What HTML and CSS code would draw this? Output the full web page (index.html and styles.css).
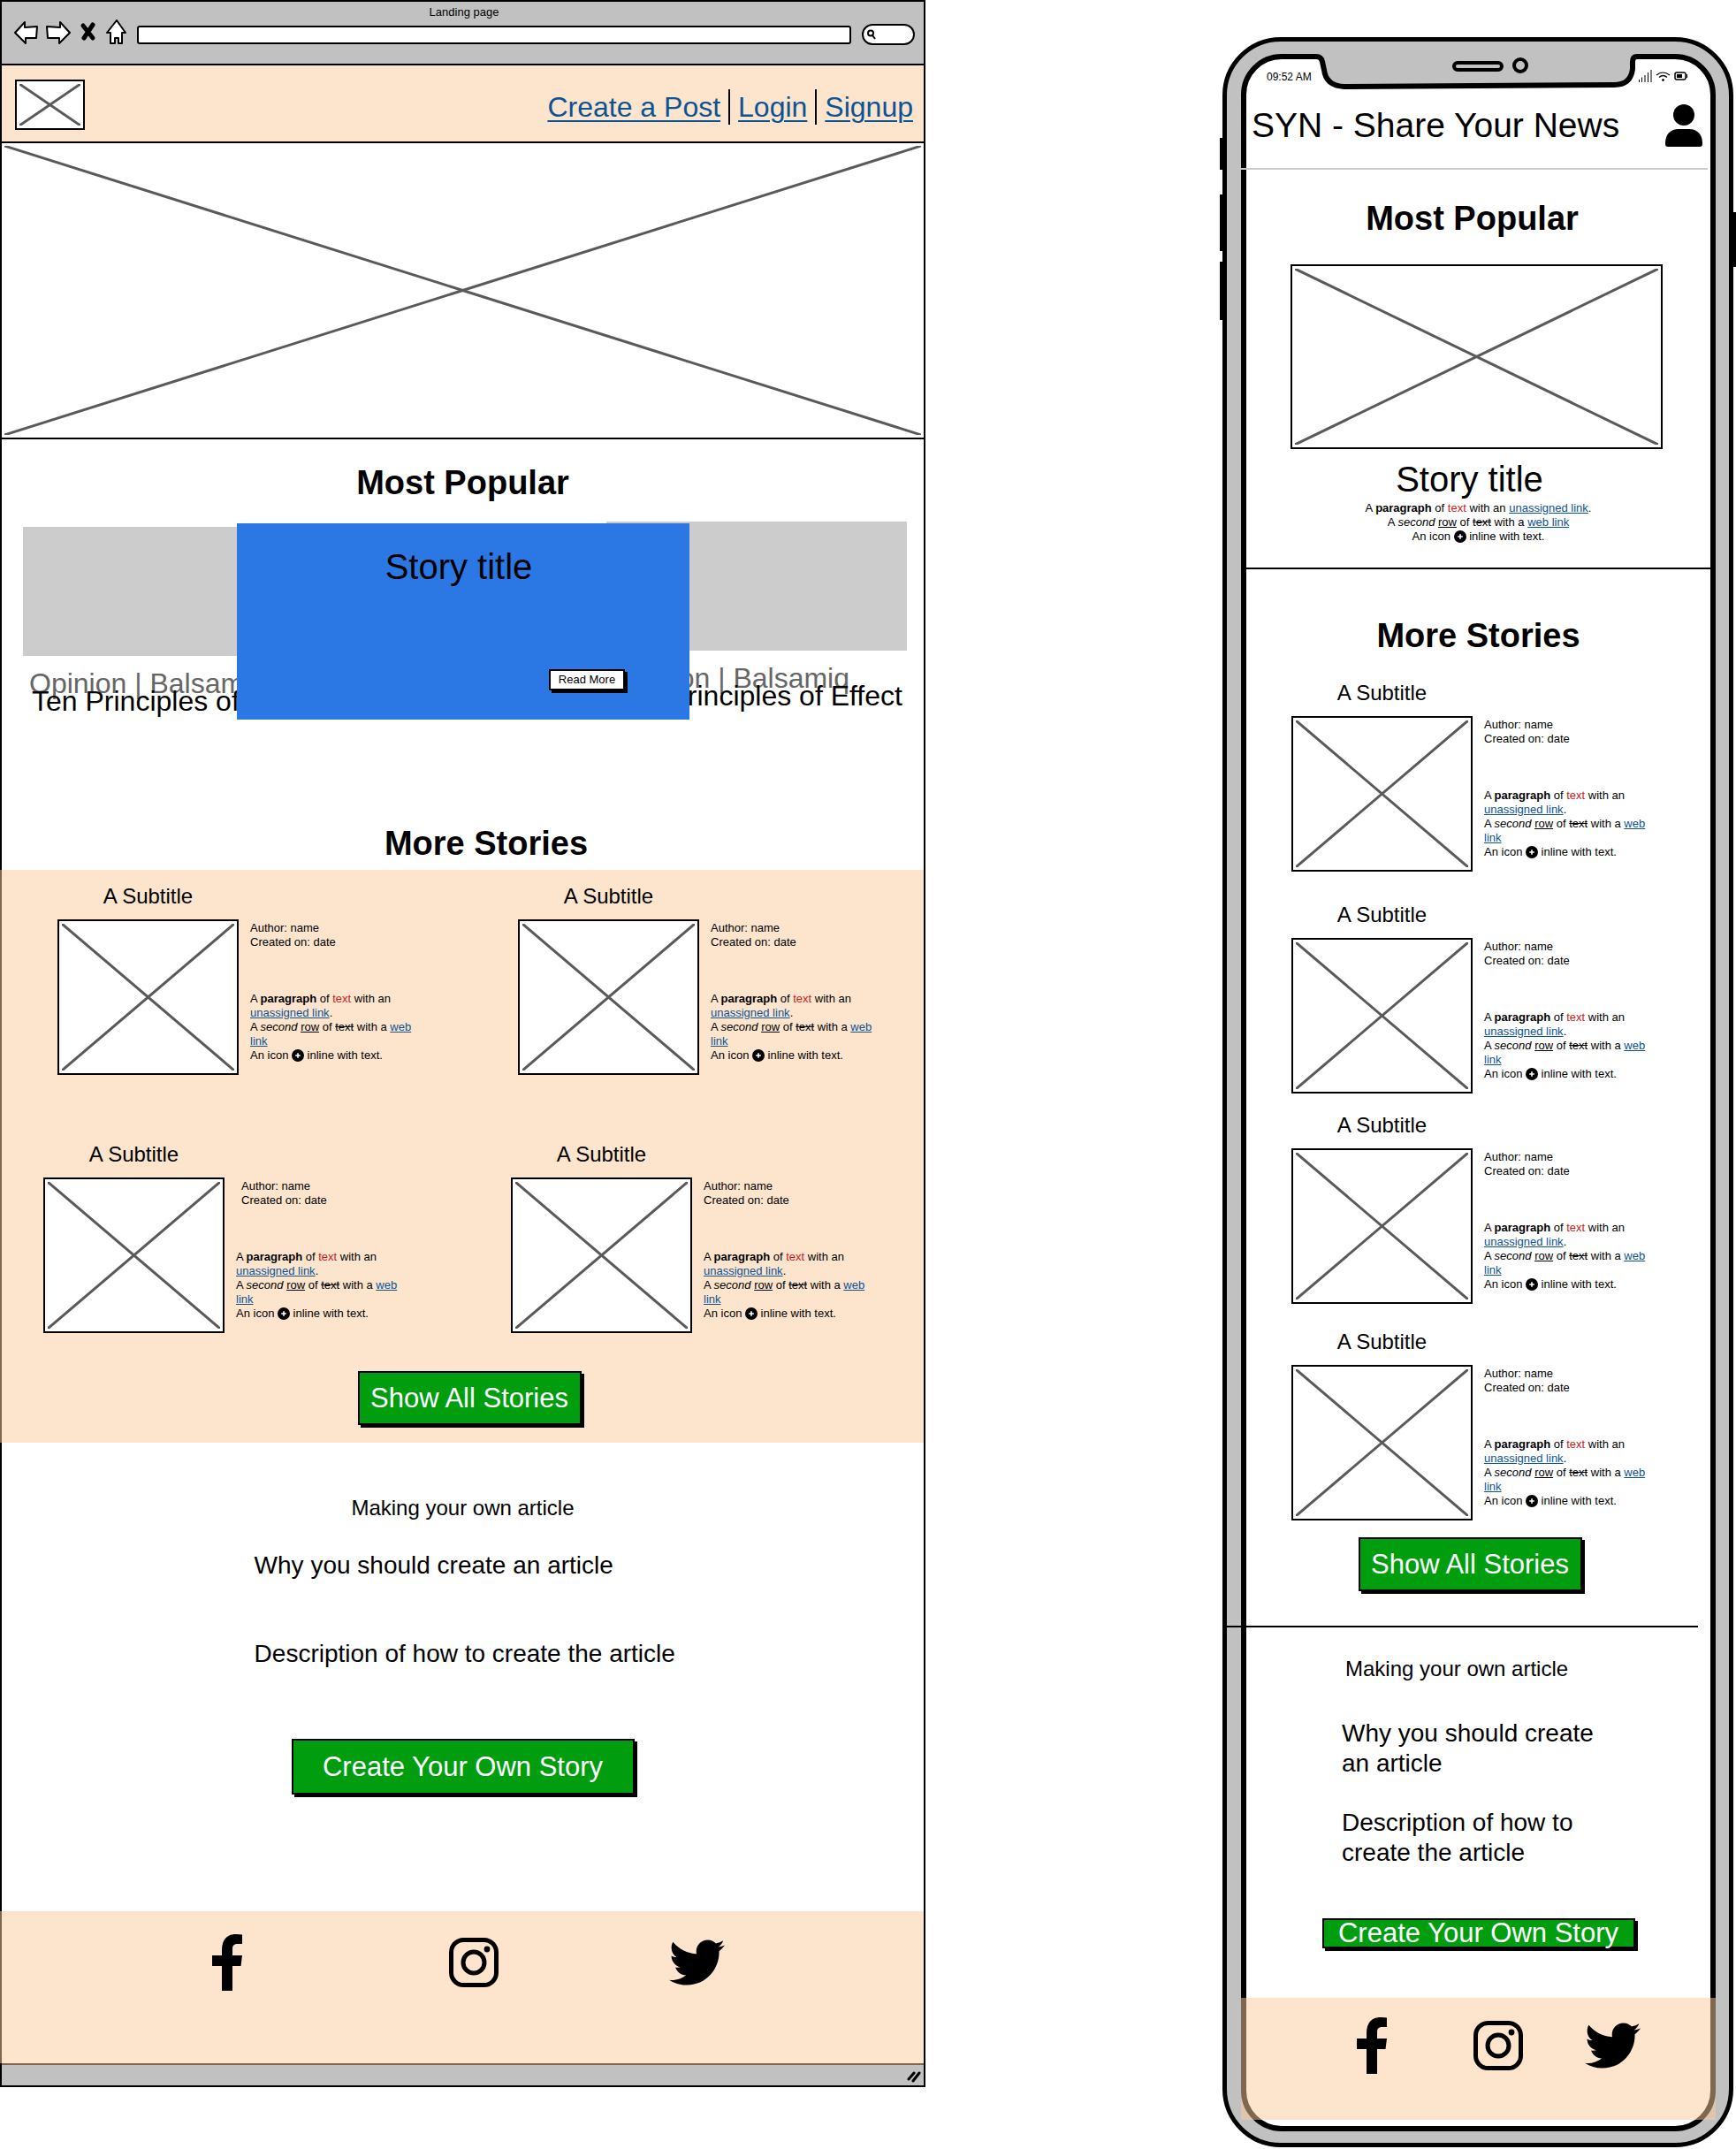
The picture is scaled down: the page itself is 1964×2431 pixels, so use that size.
FILE: index.html
```html
<!DOCTYPE html>
<html lang="en">
<head>
<meta charset="utf-8">
<meta name="viewport" content="width=device-width, initial-scale=1">
<title>Landing page</title>
<link rel="stylesheet" href="styles.css">
</head>
<body>
<svg class="sprite" aria-hidden="true">
  <symbol id="cross" viewBox="0 0 100 100" preserveAspectRatio="none">
    <path d="M0 0L100 100M100 0L0 100" vector-effect="non-scaling-stroke" fill="none" stroke="#5a5a5a" stroke-width="3" stroke-linecap="round"/>
  </symbol>
  <symbol id="plus" viewBox="0 0 14 14">
    <circle cx="7" cy="7" r="7"/><path d="M7 4.2v5.6M4.2 7h5.6" stroke="#fff" stroke-width="1.6"/>
  </symbol>
  <symbol id="facebook" viewBox="0 0 34 64">
    <path d="M11 64V36H0V24H11V18C11 6 17 0 27 0q4 0 7 .6V11h-5c-5 0-6 2.500-6 6v7h11l-1.500 12H23v28z"/>
  </symbol>
  <symbol id="instagram" viewBox="0 0 56 56">
    <rect x="2.500" y="2.500" width="51" height="51" rx="14" fill="none" stroke="#000" stroke-width="5"/>
    <circle cx="28" cy="28" r="12" fill="none" stroke="#000" stroke-width="5"/><circle cx="43" cy="13" r="3.400"/>
  </symbol>
  <symbol id="twitter" viewBox="0 0 512 418">
    <path d="M459.400 104.700c.3 4.500.3 9.100.3 13.600 0 138.700-105.600 298.600-298.600 298.600-59.500 0-114.700-17.200-161.100-47.100 8.400 1 16.600 1.300 25.300 1.300 49.100 0 94.200-16.600 130.300-44.800-46.100-1-84.800-31.200-98.100-72.800 6.500 1 13 1.600 19.800 1.600 9.400 0 18.800-1.300 27.600-3.600-48.100-9.700-84.100-52-84.100-103v-1.300c14 7.800 30.200 12.700 47.400 13.300-28.300-18.800-46.800-51-46.800-87.400 0-19.500 5.200-37.400 14.300-53 51.700 63.700 129.300 105.300 216.400 109.800-1.600-7.800-2.600-15.900-2.600-24C249.500 47.800 296.300 1 354.400 1c30.200 0 57.500 12.700 76.700 33.100 23.700-4.500 46.500-13.300 66.600-25.300-7.800 24.400-24.400 44.800-46.100 57.800 21.100-2.300 41.600-8.100 60.400-16.200-14.300 20.800-32.200 39.300-52.600 54.300z"/>
  </symbol>
</svg>

<div class="board">
  <section class="browser" aria-label="Desktop">
    <header class="chrome">
      <p class="chrome-title">Landing page</p>
      <div class="toolbar">
        <div class="tools">
          <button class="tool" aria-label="Back"><svg width="28" height="27" viewBox="0 0 28 27"><path d="M2 14L13 2V8L27 7 26 20H14V26Z" class="ink"/></svg></button>
          <button class="tool" aria-label="Forward"><svg width="28" height="27" viewBox="0 0 28 27"><path d="M27 14L16 2V8L1 7 2 20H15V26Z" class="ink"/></svg></button>
          <button class="tool" aria-label="Stop"><svg width="22" height="27" viewBox="0 0 22 27"><path d="M5 6L16 20M16 5L6 20" stroke="#000" stroke-width="5" stroke-linecap="round"/></svg></button>
          <button class="tool" aria-label="Home"><svg width="23" height="28" viewBox="0 0 23 28"><path d="M12 1L22 15H18V27H14V21H10V27H5V15H1Z" class="ink"/></svg></button>
        </div>
        <input class="url" type="text" aria-label="Address">
        <label class="search"><svg width="10" height="12" viewBox="0 0 10 12"><circle cx="4" cy="4.500" r="3" fill="none" stroke="#000" stroke-width="2"/><path d="M6 7l3 4" stroke="#000" stroke-width="2"/></svg><input type="text" aria-label="Search"></label>
      </div>
    </header>

    <div class="topbar">
      <div class="pic logo"><svg><use href="#cross"/></svg></div>
      <nav class="links"><a href="#">Create a Post</a><a href="#">Login</a><a href="#">Signup</a></nav>
    </div>

    <div class="pic hero"><svg><use href="#cross"/></svg></div>

    <h2 class="heading popular-heading">Most Popular</h2>
    <div class="carousel">
      <article class="slide slide-prev"><div class="slide-thumb"></div><p class="slide-kicker">Opinion | Balsamiq</p><p class="slide-name">Ten Principles of Effect</p></article>
      <article class="slide slide-next"><div class="slide-thumb"></div><p class="slide-kicker">Opinion | Balsamiq</p><p class="slide-name">Ten Principles of Effect</p></article>
      <article class="feature"><h3 class="story-title">Story title</h3><button class="btn btn-small">Read More</button></article>
    </div>

    <h2 class="heading more-heading">More Stories</h2>
    <div class="stories">
      <div class="story-row">
        <article class="card"><h3 class="subtitle">A Subtitle</h3><div class="pic thumb"><svg><use href="#cross"/></svg></div>
          <div class="info"><p class="meta">Author: name<br>Created on: date</p>
          <div class="blurb"><p>A <b>paragraph</b> of <span class="red">text</span> with an <a href="#">unassigned link</a>.</p><p>A <i>second</i> <u>row</u> of <s>text</s> with a <a href="#">web link</a></p><p>An icon <svg class="plus"><use href="#plus"/></svg> inline with text.</p></div></div></article>
        <article class="card"><h3 class="subtitle">A Subtitle</h3><div class="pic thumb"><svg><use href="#cross"/></svg></div>
          <div class="info"><p class="meta">Author: name<br>Created on: date</p>
          <div class="blurb"><p>A <b>paragraph</b> of <span class="red">text</span> with an <a href="#">unassigned link</a>.</p><p>A <i>second</i> <u>row</u> of <s>text</s> with a <a href="#">web link</a></p><p>An icon <svg class="plus"><use href="#plus"/></svg> inline with text.</p></div></div></article>
      </div>
      <div class="story-row story-row-wide">
        <article class="card card-indent"><h3 class="subtitle">A Subtitle</h3><div class="pic thumb"><svg><use href="#cross"/></svg></div>
          <div class="info"><p class="meta">Author: name<br>Created on: date</p>
          <div class="blurb"><p>A <b>paragraph</b> of <span class="red">text</span> with an <a href="#">unassigned link</a>.</p><p>A <i>second</i> <u>row</u> of <s>text</s> with a <a href="#">web link</a></p><p>An icon <svg class="plus"><use href="#plus"/></svg> inline with text.</p></div></div></article>
        <article class="card"><h3 class="subtitle">A Subtitle</h3><div class="pic thumb"><svg><use href="#cross"/></svg></div>
          <div class="info"><p class="meta">Author: name<br>Created on: date</p>
          <div class="blurb"><p>A <b>paragraph</b> of <span class="red">text</span> with an <a href="#">unassigned link</a>.</p><p>A <i>second</i> <u>row</u> of <s>text</s> with a <a href="#">web link</a></p><p>An icon <svg class="plus"><use href="#plus"/></svg> inline with text.</p></div></div></article>
      </div>
      <button class="btn btn-green btn-all">Show All Stories</button>
    </div>

    <section class="guide">
      <h3 class="guide-title">Making your own article</h3>
      <p class="guide-text">Why you should create an article</p>
      <p class="guide-text guide-how">Description of how to create the article</p>
      <button class="btn btn-green btn-create">Create Your Own Story</button>
    </section>

    <footer class="social">
      <a href="#" aria-label="Facebook"><svg width="34" height="64"><use href="#facebook"/></svg></a>
      <a href="#" aria-label="Instagram"><svg width="56" height="56"><use href="#instagram"/></svg></a>
      <a href="#" aria-label="Twitter"><svg width="63" height="52"><use href="#twitter"/></svg></a>
    </footer>
    <div class="statusbar"><svg width="16" height="14" viewBox="0 0 16 14"><path d="M2 10L8 3M7 12L14 3" stroke="#000" stroke-width="3" stroke-linecap="round"/></svg></div>
  </section>

  <section class="phone" aria-label="Mobile">
    <span class="key key-mute"></span><span class="key key-up"></span><span class="key key-down"></span><span class="key key-power"></span>
    <svg class="notch" width="374" height="40" viewBox="0 0 374 40">
      <path d="M0 0H374V3H366Q361 3 361 9V17Q359 35 340 35L35 37Q14 36 12 18L10 9Q9 3 3 3H0Z" fill="#c1c1c1"/>
      <path d="M0 3H3Q9 3 10 9L12 18Q14 36 35 37L340 35Q359 35 361 17V9Q361 3 366 3H374" fill="none" stroke="#000" stroke-width="6"/>
      <rect x="159" y="10" width="54" height="8" rx="4" fill="none" stroke="#000" stroke-width="4"/>
      <ellipse cx="234" cy="13" rx="7" ry="7" fill="none" stroke="#000" stroke-width="4"/>
    </svg>
    <div class="screen">
      <div class="status"><span>09:52 AM</span>
        <svg width="56" height="14" viewBox="0 0 56 14" fill="none" stroke="#000"><path d="M1.500 11v3M4.500 8.500V14M8 6v8M11.500 3v11M15 0v14"/><path d="M21 6q7-6 15 0M24 8.500q4.500-4 9 0" stroke-width="1.200"/><circle cx="28.500" cy="11.500" r="1" fill="#000"/><rect x="42" y="3" width="12" height="8" rx="2" stroke-width="1.500"/><path d="M44 7h6" stroke-width="4"/><path d="M55.500 5v4"/></svg>
      </div>
      <header class="app-bar"><h1 class="app-title">SYN - Share Your News</h1>
        <a href="#" aria-label="Account"><svg width="42" height="48" viewBox="0 0 42 48"><circle cx="21" cy="12" r="12"/><path d="M0 44C0 34 6 28 15 28H27C36 28 42 34 42 44V45Q42 48 39 48H3Q0 48 0 45Z"/></svg></a></header>
      <hr class="rule rule-light">
      <h2 class="heading m-popular">Most Popular</h2>
      <div class="pic m-hero"><svg><use href="#cross"/></svg></div>
      <h3 class="story-title m-story">Story title</h3>
      <div class="blurb m-blurb"><p>A <b>paragraph</b> of <span class="red">text</span> with an <a href="#">unassigned link</a>.</p><p>A <i>second</i> <u>row</u> of <s>text</s> with a <a href="#">web link</a></p><p>An icon <svg class="plus"><use href="#plus"/></svg> inline with text.</p></div>
      <hr class="rule">
      <h2 class="heading m-more">More Stories</h2>
      <div class="m-stories">
        <article class="card"><h3 class="subtitle">A Subtitle</h3><div class="pic thumb"><svg><use href="#cross"/></svg></div>
          <div class="info"><p class="meta">Author: name<br>Created on: date</p>
          <div class="blurb"><p>A <b>paragraph</b> of <span class="red">text</span> with an <a href="#">unassigned link</a>.</p><p>A <i>second</i> <u>row</u> of <s>text</s> with a <a href="#">web link</a></p><p>An icon <svg class="plus"><use href="#plus"/></svg> inline with text.</p></div></div></article>
        <article class="card"><h3 class="subtitle">A Subtitle</h3><div class="pic thumb"><svg><use href="#cross"/></svg></div>
          <div class="info"><p class="meta">Author: name<br>Created on: date</p>
          <div class="blurb"><p>A <b>paragraph</b> of <span class="red">text</span> with an <a href="#">unassigned link</a>.</p><p>A <i>second</i> <u>row</u> of <s>text</s> with a <a href="#">web link</a></p><p>An icon <svg class="plus"><use href="#plus"/></svg> inline with text.</p></div></div></article>
        <article class="card"><h3 class="subtitle">A Subtitle</h3><div class="pic thumb"><svg><use href="#cross"/></svg></div>
          <div class="info"><p class="meta">Author: name<br>Created on: date</p>
          <div class="blurb"><p>A <b>paragraph</b> of <span class="red">text</span> with an <a href="#">unassigned link</a>.</p><p>A <i>second</i> <u>row</u> of <s>text</s> with a <a href="#">web link</a></p><p>An icon <svg class="plus"><use href="#plus"/></svg> inline with text.</p></div></div></article>
        <article class="card"><h3 class="subtitle">A Subtitle</h3><div class="pic thumb"><svg><use href="#cross"/></svg></div>
          <div class="info"><p class="meta">Author: name<br>Created on: date</p>
          <div class="blurb"><p>A <b>paragraph</b> of <span class="red">text</span> with an <a href="#">unassigned link</a>.</p><p>A <i>second</i> <u>row</u> of <s>text</s> with a <a href="#">web link</a></p><p>An icon <svg class="plus"><use href="#plus"/></svg> inline with text.</p></div></div></article>
      </div>
      <button class="btn btn-green btn-all m-all">Show All Stories</button>
      <hr class="rule rule-shifted">
      <section class="m-guide">
        <h3 class="guide-title">Making your own article</h3>
        <p class="guide-text">Why you should create an article</p>
        <p class="guide-text">Description of how to create the article</p>
      </section>
      <button class="btn btn-green m-create">Create Your Own Story</button>
      <footer class="social m-social">
        <a href="#" aria-label="Facebook"><svg width="34" height="64"><use href="#facebook"/></svg></a>
        <a href="#" aria-label="Instagram"><svg width="56" height="56"><use href="#instagram"/></svg></a>
        <a href="#" aria-label="Twitter"><svg width="63" height="52"><use href="#twitter"/></svg></a>
      </footer>
    </div>
  </section>
</div>
</body>
</html>
```
FILE: styles.css
```css
* { box-sizing: border-box; }
:root {
  --peach: rgba(249, 202, 157, 0.51);
  --grey: #c1c1c1;
  --green: #009e0f;
  --link: #0b5394;
}
body {
  margin: 0;
  background: #fff;
  color: #000;
  font: 13px/16px "Liberation Sans", Arial, sans-serif;
}
h1, h2, h3, p { margin: 0; font-weight: normal; }
a { color: var(--link); }
button, input { font: inherit; color: inherit; }
svg { display: block; }
.sprite { position: absolute; width: 0; height: 0; }

.board {
  display: grid;
  grid-template-columns: minmax(0, 1047fr) minmax(0, 578fr);
  column-gap: 336px;
  align-items: start;
  padding-right: 3px;
}

/* Shared pieces */
.pic { border: 2px solid #000; background: #fff; padding: 3px; }
.pic svg { width: 100%; height: 100%; overflow: visible; }
.heading { font-size: 38px; line-height: 48px; font-weight: bold; text-align: center; }
.story-title { font-size: 40px; line-height: 48px; text-align: center; }
.subtitle { font-size: 24px; line-height: 28px; text-align: center; }
.guide-title { font-size: 24px; line-height: 28px; }
.guide-text { font-size: 28px; line-height: 34px; }
.btn {
  display: block;
  padding: 0;
  border: 2px solid #000;
  box-shadow: 3px 3px 0 #000;
  background: #fff;
  white-space: nowrap;
}
.btn-small { width: 86px; height: 24px; }
.btn-green { background: var(--green); color: #fff; font-size: 31px; line-height: 32px; }
.btn-all { width: 253px; height: 61px; }
.plus { display: inline-block; width: 14px; height: 14px; vertical-align: -3px; }
.red { color: #cc2222; }

.card {
  display: grid;
  grid-template-columns: 205px 192px;
  column-gap: 13px;
  row-gap: 12px;
}
.subtitle { grid-column: 1; }
.thumb { grid-column: 1; height: 176px; }
.info { grid-column: 2; padding-top: 2px; }
.meta { margin-bottom: 48px; }
.card-indent .meta { padding-left: 6px; }

/* Desktop browser */
.browser { border: 2px solid #000; }
.chrome { background: var(--grey); border-bottom: 2px solid #000; padding: 4px 10px 16px 13px; }
.chrome-title { text-align: center; }
.toolbar { display: flex; align-items: center; height: 34px; gap: 12px; }
.tools { display: flex; align-self: flex-start; gap: 9px; }
.tool { padding: 0; border: 0; background: none; }
.ink { fill: #fff; stroke: #000; stroke-width: 2; stroke-linejoin: round; }
.url { flex: 1; min-width: 0; height: 21px; border: 2px solid #000; border-radius: 3px; background: #fff; }
.search {
  display: flex;
  align-items: center;
  width: 60px;
  height: 24px;
  padding-left: 4px;
  border: 2px solid #000;
  border-radius: 12px;
  background: #fff;
}
.search input { width: 36px; height: 16px; padding: 0; border: 0; background: none; }

.topbar {
  display: flex;
  justify-content: space-between;
  align-items: center;
  padding: 16px 12px 13px 15px;
  background: var(--peach);
}
.logo { width: 79px; height: 57px; }
.links { display: flex; align-items: center; font-size: 32px; line-height: 40px; padding-top: 4px; }
.links a { text-underline-offset: 4px; text-decoration-thickness: 2px; }
.links a + a { margin-left: 9px; padding-left: 9px; border-left: 2px solid #000; }
.hero { height: 337px; margin: 0 -2px; }

.popular-heading { margin-top: 25px; }
.carousel {
  display: grid;
  grid-template-columns: minmax(0, 242fr) minmax(0, 98fr) minmax(0, 320fr) minmax(0, 94fr) minmax(0, 246fr);
  align-items: start;
  margin: 20px 19px 0 24px;
}
.slide { grid-row: 1; overflow: hidden; font-size: 32px; line-height: 20px; white-space: nowrap; }
.slide-prev { grid-column: 1 / 3; margin-top: 6px; }
.slide-next { grid-column: 4 / 6; }
.slide-thumb { height: 146px; margin-bottom: 21px; background: #ccc; }
.slide-kicker { padding-left: 7px; color: #666; }
.slide-name { padding: 0 0 8px 10px; }
.feature {
  grid-area: 1 / 2 / 2 / 5;
  display: flex;
  flex-direction: column;
  justify-content: space-between;
  height: 222px;
  margin-top: 2px;
  padding: 25px 0 33px;
  background: #2b78e4;
}
.feature .story-title { padding-right: 10px; }
.feature .btn { align-self: flex-end; margin-right: 73px; }

.more-heading { margin-top: 116px; padding-left: 53px; }
.stories { margin: 6px 0 0 -2px; padding: 16px 0 20px; background: var(--peach); }
.stories .btn-all { margin-left: calc(50% - 118px); }
.story-row { display: grid; grid-template-columns: 521fr 459fr; padding-left: 65px; }
.story-row-wide { grid-template-columns: 529fr 467fr; margin: 76px 0 43px; padding-left: 49px; }

.guide { padding: 60px 0 132px; }
.guide .guide-title { text-align: center; margin-bottom: 34px; }
.guide .guide-text { padding-left: 27%; margin-left: 4px; }
.guide .guide-how { margin-top: 66px; }
.btn-create { width: 388px; height: 63px; margin: 79px auto 0; }

.social {
  display: grid;
  grid-template-columns: 267fr 249fr 287fr;
  align-items: center;
  margin-left: -2px;
  padding: 26px 0 82px 23%;
  background: var(--peach);
}
.statusbar {
  display: flex;
  justify-content: flex-end;
  padding: 6px 3px 3px;
  border-top: 2px solid #7d654e;
  background: var(--grey);
}

/* Phone */
.phone {
  position: relative;
  margin-top: 42px;
  padding: 14px 15px 13px 16px;
  border: 5px solid #000;
  border-radius: 66px;
  background: var(--grey);
}
.screen { border: 6px solid #000; border-radius: 46px; background: #fff; padding: 12px 0 7px; }
.notch { position: absolute; top: 14px; left: 50%; margin-left: -186px; }
.key { position: absolute; left: -8px; width: 4px; background: #000; }
.key-mute { top: 109px; height: 36px; }
.key-up { top: 173px; height: 64px; }
.key-down { top: 249px; height: 66px; }
.key-power { top: 193px; left: auto; right: -8px; height: 62px; }
.status { display: flex; justify-content: space-between; padding: 0 26px 0 23px; font-size: 12px; }
.app-bar { display: flex; justify-content: space-between; padding: 23px 9px 24px 6px; }
.app-bar a { color: #000; }
.app-title { font-size: 39px; line-height: 48px; white-space: nowrap; }
.rule { height: 2px; margin: 27px -6px 0; border: 0; background: #000; }
.rule-light { margin: 0 3px 0 -6px; background: #ccc; }
.rule-shifted { margin: 39px 14px 0 -26px; }
.m-popular { margin: 31px 14px 28px 0; }
.m-hero { height: 209px; margin: 0 54px 0 50px; }
.m-story { margin-top: 10px; padding-right: 20px; }
.m-blurb { margin-top: 1px; text-align: center; }
.m-more { margin: 51px 0 27px; }
.m-stories { display: grid; row-gap: 22px; padding-left: 51px; }
.m-stories .card:nth-child(2) { margin-top: 13px; }
.m-stories .card:nth-child(4) { margin-top: 7px; }
.m-all { margin: 19px 0 0 calc(50% - 136px); }
.m-guide { padding: 33px 0 0 108px; }
.m-guide .guide-title { padding-left: 4px; margin-bottom: 42px; }
.m-guide .guide-text { max-width: 300px; margin-bottom: 33px; }
.m-create { width: 354px; height: 34px; margin: 57px auto 56px; line-height: 28px; }
.m-social { grid-template-columns: 133fr 127fr 149fr; margin: 0 -6px; padding: 22px 0 52px 25%; }
```
